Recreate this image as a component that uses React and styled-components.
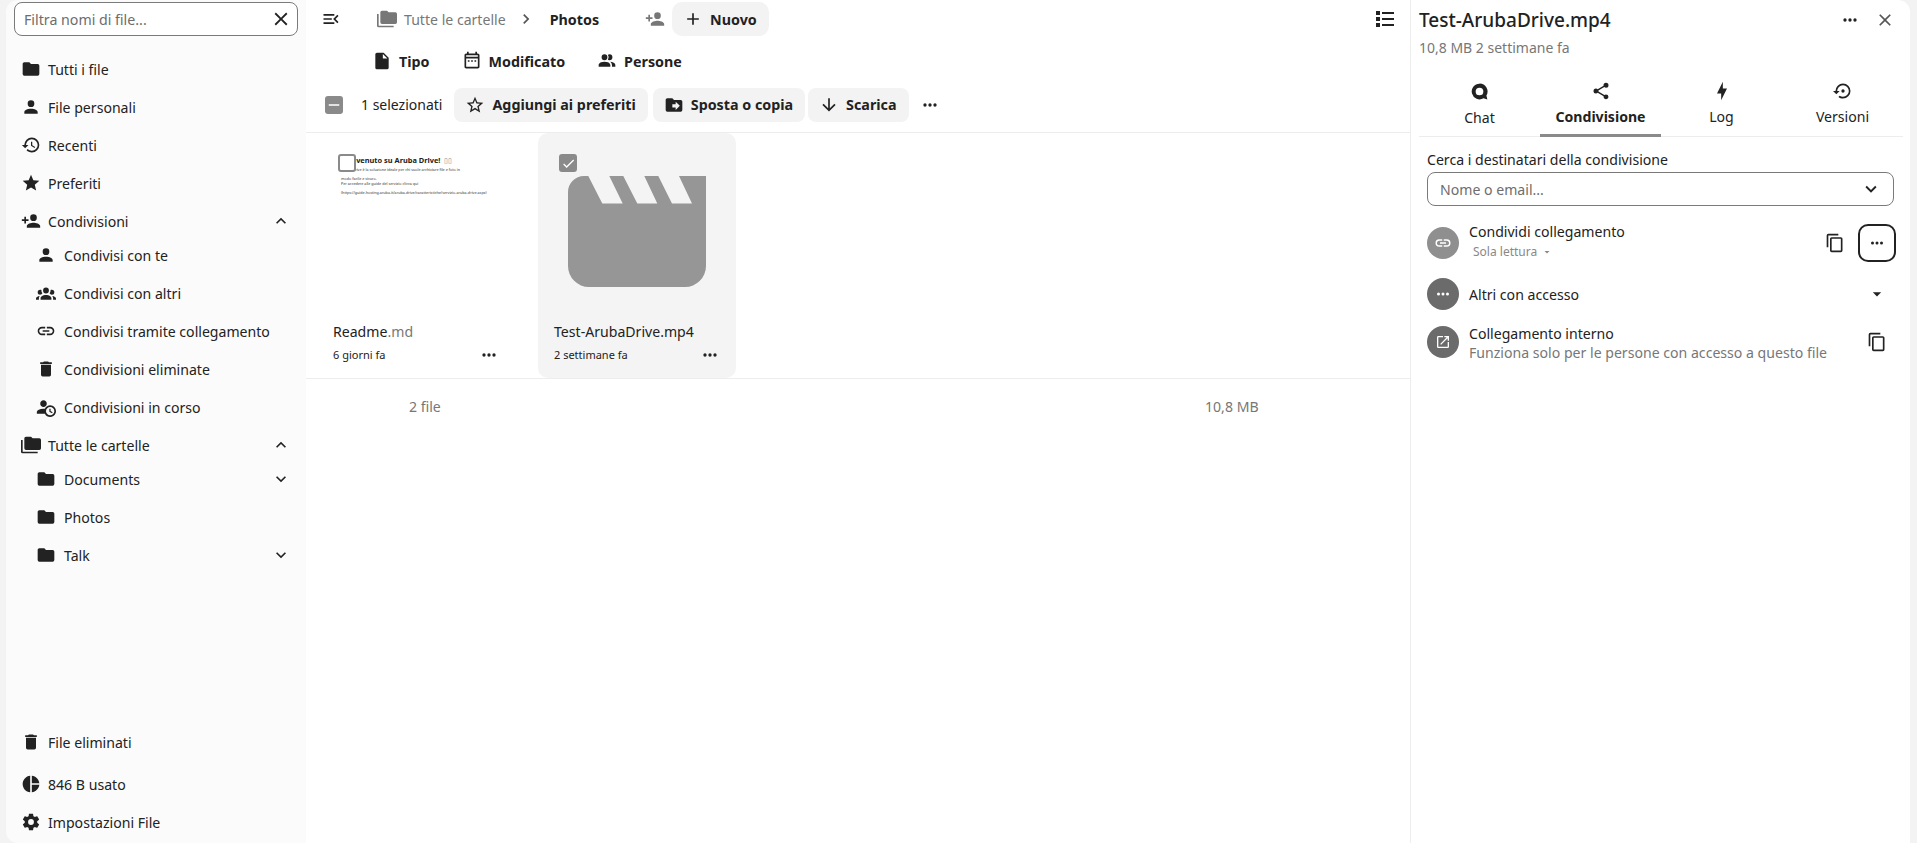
import React from "react";
import styled, { createGlobalStyle } from "styled-components";

const P = {
  folder: "M10,4H4C2.89,4 2,4.89 2,6V18A2,2 0 0,0 4,20H20A2,2 0 0,0 22,18V8C22,6.89 21.1,6 20,6H12L10,4Z",
  account: "M12,4A4,4 0 0,1 16,8A4,4 0 0,1 12,12A4,4 0 0,1 8,8A4,4 0 0,1 12,4M12,14C16.42,14 20,15.79 20,18V20H4V18C4,15.79 7.58,14 12,14Z",
  history: "M13.5,8H12V13L16.28,15.54L17,14.33L13.5,12.25V8M13,3A9,9 0 0,0 4,12H1L4.96,16.03L9,12H6A7,7 0 0,1 13,5A7,7 0 0,1 20,12A7,7 0 0,1 13,19C11.07,19 9.32,18.21 8.06,16.94L6.64,18.36C8.27,20 10.5,21 13,21A9,9 0 0,0 22,12A9,9 0 0,0 13,3",
  star: "M12,17.27L18.18,21L16.54,13.97L22,9.24L14.81,8.62L12,2L9.19,8.62L2,9.24L7.45,13.97L5.82,21L12,17.27Z",
  accountPlus: "M15,14C12.33,14 7,15.33 7,18V20H23V18C23,15.33 17.67,14 15,14M6,10V7H4V10H1V12H4V15H6V12H9V10M15,12A4,4 0 0,0 19,8A4,4 0 0,0 15,4A4,4 0 0,0 11,8A4,4 0 0,0 15,12Z",
  group: "M12,5.5A3.5,3.5 0 0,1 15.5,9A3.5,3.5 0 0,1 12,12.5A3.5,3.5 0 0,1 8.5,9A3.5,3.5 0 0,1 12,5.5M5,8C5.56,8 6.08,8.15 6.53,8.42C6.38,9.85 6.8,11.27 7.66,12.38C7.16,13.34 6.16,14 5,14A3,3 0 0,1 2,11A3,3 0 0,1 5,8M19,8A3,3 0 0,1 22,11A3,3 0 0,1 19,14C17.84,14 16.84,13.34 16.34,12.38C17.2,11.27 17.62,9.85 17.47,8.42C17.92,8.15 18.44,8 19,8M5.5,18.25C5.5,16.18 8.41,14.5 12,14.5C15.59,14.5 18.5,16.18 18.5,18.25V20H5.5V18.25M0,20V18.5C0,17.11 1.89,15.94 4.45,15.6C3.86,16.28 3.5,17.22 3.5,18.25V20H0M24,20H20.5V18.25C20.5,17.22 20.14,16.28 19.55,15.6C22.11,15.94 24,17.11 24,18.5V20Z",
  link: "M3.9,12C3.9,10.29 5.29,8.9 7,8.9H11V7H7A5,5 0 0,0 2,12A5,5 0 0,0 7,17H11V15.1H7C5.29,15.1 3.9,13.71 3.9,12M8,13H16V11H8V13M17,7H13V8.9H17C18.71,8.9 20.1,10.29 20.1,12C20.1,13.71 18.71,15.1 17,15.1H13V17H17A5,5 0 0,0 22,12A5,5 0 0,0 17,7Z",
  del: "M19,4H15.5L14.5,3H9.5L8.5,4H5V6H19M6,19A2,2 0 0,0 8,21H16A2,2 0 0,0 18,19V7H6V19Z",
  accountClock: "M10.63,14.1C12.23,10.58 16.38,9.03 19.9,10.63C23.42,12.23 24.97,16.38 23.37,19.9C22.24,22.4 19.75,24 17,24C14.3,24 11.83,22.44 10.67,20H1V18C1.06,16.86 1.84,15.93 3.34,15.18C4.84,14.43 6.72,14.04 9,14C9.57,14 10.11,14.05 10.63,14.1V14.1M9,4C10.12,4.03 11.06,4.42 11.81,5.17C12.56,5.92 12.93,6.86 12.93,8C12.93,9.14 12.56,10.08 11.81,10.83C11.06,11.58 10.12,11.95 9,11.95C7.88,11.95 6.94,11.58 6.19,10.83C5.44,10.08 5.07,9.14 5.07,8C5.07,6.86 5.44,5.92 6.19,5.17C6.94,4.42 7.88,4.03 9,4M17,22A5,5 0 0,0 22,17A5,5 0 0,0 17,12A5,5 0 0,0 12,17A5,5 0 0,0 17,22M16,14H17.5V16.82L19.94,18.23L19.19,19.53L16,17.69V14Z",
  folderMulti: "M22,4H14L12,2H6A2,2 0 0,0 4,4V16A2,2 0 0,0 6,18H22A2,2 0 0,0 24,16V6A2,2 0 0,0 22,4M2,6H0V11H0V20A2,2 0 0,0 2,22H20V20H2V6Z",
  up: "M7.41,15.41L12,10.83L16.59,15.41L18,14L12,8L6,14L7.41,15.41Z",
  down: "M7.41,8.58L12,13.17L16.59,8.58L18,10L12,16L6,10L7.41,8.58Z",
  right: "M8.59,16.58L13.17,12L8.59,7.41L10,6L16,12L10,18L8.59,16.58Z",
  close: "M19,6.41L17.59,5L12,10.59L6.41,5L5,6.41L10.59,12L5,17.59L6.41,19L12,13.41L17.59,19L19,17.59L13.41,12L19,6.41Z",
  pie: "M11,2V22C5.9,21.5 2,17.2 2,12C2,6.8 5.9,2.5 11,2M13,2V11H22C21.5,6.2 17.8,2.5 13,2M13,13V22C17.7,21.5 21.5,17.8 22,13H13Z",
  cog: "M12,15.5A3.5,3.5 0 0,1 8.5,12A3.5,3.5 0 0,1 12,8.5A3.5,3.5 0 0,1 15.5,12A3.5,3.5 0 0,1 12,15.5M19.43,12.97C19.47,12.65 19.5,12.33 19.5,12C19.5,11.67 19.47,11.34 19.43,11L21.54,9.37C21.73,9.22 21.78,8.95 21.66,8.73L19.66,5.27C19.54,5.05 19.27,4.96 19.05,5.05L16.56,6.05C16.04,5.66 15.5,5.32 14.87,5.07L14.5,2.42C14.46,2.18 14.25,2 14,2H10C9.75,2 9.54,2.18 9.5,2.42L9.13,5.07C8.5,5.32 7.96,5.66 7.44,6.05L4.95,5.05C4.73,4.96 4.46,5.05 4.34,5.27L2.34,8.73C2.21,8.95 2.27,9.22 2.46,9.37L4.57,11C4.53,11.34 4.5,11.67 4.5,12C4.5,12.33 4.53,12.65 4.57,12.97L2.46,14.63C2.27,14.78 2.21,15.05 2.34,15.27L4.34,18.73C4.46,18.95 4.73,19.03 4.95,18.95L7.44,17.94C7.96,18.34 8.5,18.68 9.13,18.93L9.5,21.58C9.54,21.82 9.75,22 10,22H14C14.25,22 14.46,21.82 14.5,21.58L14.87,18.93C15.5,18.67 16.04,18.34 16.56,17.94L19.05,18.95C19.27,19.03 19.54,18.95 19.66,18.73L21.66,15.27C21.78,15.05 21.73,14.78 21.54,14.63L19.43,12.97Z",
  menuOpen: "M21,15.61L19.59,17L14.58,12L19.59,7L21,8.39L17.44,12L21,15.61M3,6H16V8H3V6M3,13V11H13V13H3M3,18V16H16V18H3Z",
  plus: "M19,13H13V19H11V13H5V11H11V5H13V11H19V13Z",
  file: "M13,9V3.5L18.5,9M6,2C4.89,2 4,2.89 4,4V20A2,2 0 0,0 6,22H18A2,2 0 0,0 20,20V8L14,2H6Z",
  calendar: "M7 11H9V13H7V11M21 5V19C21 20.11 20.11 21 19 21H5C3.89 21 3 20.1 3 19V5C3 3.9 3.9 3 5 3H6V1H8V3H16V1H18V3H19C20.11 3 21 3.9 21 5M5 7H19V5H5V7M19 19V9H5V19H19M17 13V11H15V13H17M13 13V11H11V13H13Z",
  people: "M16 17V19H2V17S2 13 9 13 16 17 16 17M12.5 7.5A3.5 3.5 0 1 0 9 11A3.5 3.5 0 0 0 12.5 7.5M15.94 13A5.32 5.32 0 0 1 18 17V19H22V17S22 13.37 15.94 13M15 4A3.39 3.39 0 0 0 13.07 4.59A5 5 0 0 1 13.07 10.41A3.39 3.39 0 0 0 15 11A3.5 3.5 0 0 0 15 4Z",
  starOutline: "M12,15.39L8.24,17.66L9.23,13.38L5.91,10.5L10.29,10.13L12,6.09L13.71,10.13L18.09,10.5L14.77,13.38L15.76,17.66M22,9.24L14.81,8.62L12,2L9.19,8.62L2,9.24L7.45,13.97L5.82,21L12,17.27L18.18,21L16.54,13.97L22,9.24Z",
  folderMove: "M14,18V15H10V11H14V8L19,13M20,6H12L10,4H4C2.89,4 2,4.89 2,6V18A2,2 0 0,0 4,20H20A2,2 0 0,0 22,18V8C22,6.89 21.1,6 20,6Z",
  arrowDown: "M11,4H13V16L18.5,10.5L19.92,11.92L12,19.84L4.08,11.92L5.5,10.5L11,16V4Z",
  dots: "M16,12A2,2 0 0,1 18,10A2,2 0 0,1 20,12A2,2 0 0,1 18,14A2,2 0 0,1 16,12M10,12A2,2 0 0,1 12,10A2,2 0 0,1 14,12A2,2 0 0,1 12,14A2,2 0 0,1 10,12M4,12A2,2 0 0,1 6,10A2,2 0 0,1 8,12A2,2 0 0,1 6,14A2,2 0 0,1 4,12Z",
  listSquare: "M3,4H7V8H3V4M9,5V7H21V5H9M3,10H7V14H3V10M9,11V13H21V11H9M3,16H7V20H3V16M9,17V19H21V17H9",
  share: "M18,16.08C17.24,16.08 16.56,16.38 16.04,16.85L8.91,12.7C8.96,12.47 9,12.24 9,12C9,11.76 8.96,11.53 8.91,11.3L15.96,7.19C16.5,7.69 17.21,8 18,8A3,3 0 0,0 21,5A3,3 0 0,0 18,2A3,3 0 0,0 15,5C15,5.24 15.04,5.47 15.09,5.7L8.04,9.81C7.5,9.31 6.79,9 6,9A3,3 0 0,0 3,12A3,3 0 0,0 6,15C6.79,15 7.5,14.69 8.04,14.19L15.16,18.34C15.11,18.55 15.08,18.77 15.08,19C15.08,20.61 16.39,21.91 18,21.91C19.61,21.91 20.92,20.61 20.92,19A2.92,2.92 0 0,0 18,16.08Z",
  bolt: "M11,15H6L13,1V9H18L11,23V15Z",
  restore: "M12,3A9,9 0 0,0 3,12H0L4,16L8,12H5A7,7 0 0,1 12,5A7,7 0 0,1 19,12A7,7 0 0,1 12,19C10.5,19 9.09,18.5 7.94,17.7L6.5,19.14C8.04,20.3 9.94,21 12,21A9,9 0 0,0 21,12A9,9 0 0,0 12,3M14,12A2,2 0 0,0 12,10A2,2 0 0,0 10,12A2,2 0 0,0 12,14A2,2 0 0,0 14,12Z",
  copy: "M19,21H8V7H19M19,5H8A2,2 0 0,0 6,7V21A2,2 0 0,0 8,23H19A2,2 0 0,0 21,21V7A2,2 0 0,0 19,5M16,1H4A2,2 0 0,0 2,3V17H4V3H16V1Z",
  openNew: "M14,3V5H17.59L7.76,14.83L9.17,16.24L19,6.41V10H21V3M19,19H5V5H12V3H5C3.89,3 3,3.9 3,5V19A2,2 0 0,0 5,21H19A2,2 0 0,0 21,19V12H19V19Z",
  menuDown: "M7,10L12,15L17,10H7Z",
  check: "M21,7L9,19L3.5,13.5L4.91,12.09L9,16.17L19.59,5.59L21,7Z",
  minus: "M19,13H5V11H19V13Z",
  talk: "M12 3A9 9 0 1 0 16.6 19.8L21 21L19.9 16.6A9 9 0 0 0 12 3ZM12 7.6A4.4 4.4 0 1 1 12 16.4A4.4 4.4 0 0 1 12 7.6Z",
};

const Global = createGlobalStyle`
  html, body { margin: 0; padding: 0; height: 100%; background: #f3f3f3; }
  body { font-family: "Noto Sans", "Open Sans", sans-serif; color: #222; overflow: hidden; }
  * { box-sizing: border-box; }
`;

const Svg = styled.svg`
  width: ${p => p.$size || 20}px;
  height: ${p => p.$size || 20}px;
  flex: none;
  display: block;
  fill: ${p => p.$color || "#222"};
`;
const Icon = ({ d, size, color, rule }) => (
  <Svg viewBox="0 0 24 24" $size={size} $color={color}><path d={d} fillRule={rule} /></Svg>
);

const Shell = styled.div`
  display: grid;
  grid-template-columns: 300px 1104px 500px;
  height: 843px;
  padding-left: 6px;
`;

/* sidebar */
const Sidebar = styled.aside`
  background: #fbfbfb;
  border-radius: 12px 0 0 12px;
  display: flex;
  flex-direction: column;
  padding-top: 2px;
  padding-bottom: 2px;
`;
const FilterBox = styled.div`
  margin: 0 8px 14px;
  height: 34px;
  border: 1px solid #7a7a7a;
  border-radius: 8px;
  background: #fff;
  display: flex;
  align-items: center;
  justify-content: space-between;
  padding: 0 5px 0 9px;
  font-size: 14.2px;
  color: #6d6d6d;
`;
const NavRow = styled.div`
  height: 38px;
  display: flex;
  align-items: center;
  padding-left: ${p => (p.$child ? 28 : 13)}px;
  padding-right: 15px;
  font-size: 14.1px;
  color: #222;
  margin-top: ${p => p.$pull || 0}px;
`;
const NavIcon = styled.span`
  width: 24px;
  display: flex;
  justify-content: center;
  flex: none;
  margin-right: ${p => (p.$child ? 6 : 5)}px;
`;
const NavLabel = styled.span`
  flex: 1;
  white-space: nowrap;
`;
const NavFoot = styled.div`
  margin-top: auto;
  display: flex;
  flex-direction: column;
`;

const NavItem = ({ icon, label, child, chevron, pull }) => (
  <NavRow $child={child} $pull={pull}>
    <NavIcon $child={child}><Icon d={icon} /></NavIcon>
    <NavLabel>{label}</NavLabel>
    {chevron && <Icon d={chevron} />}
  </NavRow>
);

/* main */
const Main = styled.main`
  background: #fff;
  display: flex;
  flex-direction: column;
`;
const TopBar = styled.div`
  height: 38px;
  display: flex;
  align-items: center;
  padding: 0 13px 0 15px;
`;
const CrumbMuted = styled.span`
  font-size: 14.1px;
  color: #777;
  margin-left: 7px;
`;
const CrumbStrong = styled.span`
  font-size: 14.3px;
  font-weight: 700;
`;
const Spacer = styled.div`
  width: ${p => p.$w}px;
  flex: none;
`;
const NewButton = styled.div`
  height: 34px;
  border-radius: 10px;
  background: #f3f3f3;
  display: flex;
  align-items: center;
  padding: 0 12px 0 11px;
  gap: 7px;
  font-size: 14.3px;
  font-weight: 700;
  margin-left: 7px;
`;
const Push = styled.div`
  margin-left: auto;
`;
const FilterBar = styled.div`
  height: 38px;
  margin-top: 4px;
  display: flex;
  align-items: center;
  padding-left: 66px;
  gap: 32px;
`;
const Chip = styled.div`
  display: flex;
  align-items: center;
  gap: 7px;
  font-size: 14.3px;
  font-weight: 700;
`;
const ActionBar = styled.div`
  height: 53px;
  padding: 8px 0 11px 19px;
  display: flex;
  align-items: center;
  border-bottom: 1px solid #ededed;
`;
const MixedCheck = styled.div`
  width: 18px;
  height: 18px;
  border-radius: 3px;
  background: #8a8a8a;
  display: flex;
  align-items: center;
  justify-content: center;
`;
const SelectedText = styled.span`
  font-size: 14px;
  margin: 0 12px 0 18px;
`;
const ActionButton = styled.div`
  height: 34px;
  border-radius: 8px;
  background: #f3f3f3;
  display: flex;
  align-items: center;
  gap: 7px;
  padding: 0 12px 0 11px;
  font-size: 14.3px;
  font-weight: 700;
  margin-right: ${p => p.$gap}px;
`;
const Cards = styled.div`
  display: flex;
  gap: 23px;
  padding-left: 11px;
  height: 246px;
  border-bottom: 1px solid #ededed;
`;
const Card = styled.div`
  position: relative;
  width: 198px;
  height: 245px;
  border-radius: 10px;
  background: ${p => (p.$selected ? "#f4f4f4" : "transparent")};
  padding: 0 16px;
  display: flex;
  flex-direction: column;
`;
const CardCheck = styled.div`
  position: absolute;
  left: 21px;
  top: 21px;
  width: 18px;
  height: 18px;
  border-radius: 3px;
  border: 2.5px solid #8a8a8a;
  background: ${p => (p.$on ? "#8a8a8a" : "#fff")};
  display: flex;
  align-items: center;
  justify-content: center;
`;
const Thumb = styled.div`
  height: 188px;
  padding-top: ${p => p.$top}px;
  overflow: hidden;
`;
const DocTitle = styled.div`
  font-size: 7.4px;
  font-weight: 700;
  line-height: 12px;
  white-space: nowrap;
  margin-left: 9px;
`;
const Tofu = styled.span`
  font-weight: 400;
  color: #888;
  margin-left: 4px;
`;
const DocLine = styled.div`
  font-size: 3.7px;
  line-height: 5px;
  white-space: nowrap;
  margin-left: 8px;
  margin-top: ${p => p.$gap || 0}px;
  color: #333;
`;
const Clap = styled.svg`
  width: 138px;
  height: 111px;
  display: block;
  margin-left: 14px;
`;
const FileName = styled.div`
  font-size: 14.1px;
  line-height: 22px;
  white-space: nowrap;
`;
const Ext = styled.span`
  color: #777;
`;
const FileMeta = styled.div`
  display: flex;
  align-items: center;
  justify-content: space-between;
  font-size: 11px;
  line-height: 20px;
  margin-top: 2px;
`;
const Summary = styled.div`
  display: grid;
  grid-template-columns: 796px auto;
  padding: 18px 0 0 103px;
  font-size: 14.1px;
  color: #777;
`;

/* details */
const Panel = styled.section`
  background: #fff;
  border-left: 1px solid #ededed;
  border-radius: 0 12px 0 0;
  padding-left: 8px;
  display: flex;
  flex-direction: column;
`;
const PanelHead = styled.div`
  height: 40px;
  display: flex;
  align-items: center;
  padding-right: 15px;
  gap: 15px;
`;
const PanelTitle = styled.div`
  font-size: 19px;
  font-weight: 500;
  flex: 1;
  white-space: nowrap;
`;
const PanelSub = styled.div`
  font-size: 14px;
  color: #777;
  line-height: 20px;
  margin-top: -2px;
`;
const Tabs = styled.div`
  display: grid;
  grid-template-columns: repeat(4, 121px);
  margin-top: 19px;
  border-bottom: 1px solid #ededed;
  width: 484px;
`;
const Tab = styled.div`
  height: 60px;
  display: flex;
  flex-direction: column;
  align-items: center;
  justify-content: flex-start;
  font-size: 14.1px;
  line-height: 20px;
  padding-top: 4px;
  gap: 6px;
  font-weight: ${p => (p.$active ? 700 : 400)};
  border-bottom: 3px solid ${p => (p.$active ? "#8a8a8a" : "transparent")};
  margin-bottom: -1px;
`;
const Body = styled.div`
  padding: 13px 14px 0 8px;
  display: flex;
  flex-direction: column;
`;
const FieldLabel = styled.div`
  font-size: 14.1px;
  line-height: 20px;
  height: 22px;
`;
const Combo = styled.div`
  height: 34px;
  width: 467px;
  border: 1px solid #7a7a7a;
  border-radius: 8px;
  display: flex;
  align-items: center;
  justify-content: space-between;
  padding: 0 11px 0 12px;
  font-size: 14.1px;
  color: #6d6d6d;
`;
const ShareList = styled.div`
  display: flex;
  flex-direction: column;
  gap: 16px;
  margin-top: 18px;
`;
const ShareRow = styled.div`
  display: flex;
  align-items: center;
  height: ${p => p.$h}px;
`;
const Avatar = styled.div`
  width: 32px;
  height: 32px;
  border-radius: 50%;
  flex: none;
  background: ${p => p.$bg};
  display: flex;
  align-items: center;
  justify-content: center;
  margin-right: 10px;
`;
const ShareText = styled.div`
  flex: 1;
  min-width: 0;
  white-space: nowrap;
  margin-top: ${p => p.$shift || 0}px;
`;
const ShareName = styled.div`
  font-size: 14.1px;
  line-height: 19px;
`;
const ShareNote = styled.div`
  font-size: 14.1px;
  line-height: 19px;
  color: #777;
`;
const PermNote = styled.div`
  font-size: 12px;
  line-height: 18px;
  color: #888;
  margin: 2px 0 0 4px;
  display: flex;
  align-items: center;
  gap: 4px;
`;
const IconSlot = styled.div`
  width: 38px;
  height: 38px;
  flex: none;
  display: flex;
  align-items: center;
  justify-content: center;
  margin-left: ${p => p.$gap || 0}px;
  border-radius: 10px;
  border: ${p => (p.$focus ? "2px solid #222" : "none")};
`;

export default function App() {
  return (
    <>
      <Global />
      <Shell>
        <Sidebar>
          <FilterBox>
            <span>Filtra nomi di file...</span>
            <Icon d={P.close} size={22} />
          </FilterBox>
          <NavItem icon={P.folder} label="Tutti i file" />
          <NavItem icon={P.account} label="File personali" />
          <NavItem icon={P.history} label="Recenti" />
          <NavItem icon={P.star} label="Preferiti" />
          <NavItem icon={P.accountPlus} label="Condivisioni" chevron={P.up} />
          <NavItem child icon={P.account} label="Condivisi con te" pull={-4} />
          <NavItem child icon={P.group} label="Condivisi con altri" />
          <NavItem child icon={P.link} label="Condivisi tramite collegamento" />
          <NavItem child icon={P.del} label="Condivisioni eliminate" />
          <NavItem child icon={P.accountClock} label="Condivisioni in corso" />
          <NavItem icon={P.folderMulti} label="Tutte le cartelle" chevron={P.up} />
          <NavItem child icon={P.folder} label="Documents" chevron={P.down} pull={-4} />
          <NavItem child icon={P.folder} label="Photos" />
          <NavItem child icon={P.folder} label="Talk" chevron={P.down} />
          <NavFoot>
            <NavItem icon={P.del} label="File eliminati" />
            <NavItem icon={P.pie} label="846 B usato" pull={4} />
            <NavItem icon={P.cog} label="Impostazioni File" />
          </NavFoot>
        </Sidebar>

        <Main>
          <TopBar>
            <Icon d={P.menuOpen} />
            <Spacer $w={36} />
            <Icon d={P.folderMulti} color="#777" />
            <CrumbMuted>Tutte le cartelle</CrumbMuted>
            <Spacer $w={10} />
            <Icon d={P.right} color="#555" />
            <Spacer $w={14} />
            <CrumbStrong>Photos</CrumbStrong>
            <Spacer $w={46} />
            <Icon d={P.accountPlus} color="#777" />
            <NewButton>
              <Icon d={P.plus} />
              Nuovo
            </NewButton>
            <Push><Icon d={P.listSquare} size={24} /></Push>
          </TopBar>
          <FilterBar>
            <Chip><Icon d={P.file} />Tipo</Chip>
            <Chip><Icon d={P.calendar} />Modificato</Chip>
            <Chip><Icon d={P.people} />Persone</Chip>
          </FilterBar>
          <ActionBar>
            <MixedCheck><Icon d={P.minus} size={18} color="#fff" /></MixedCheck>
            <SelectedText>1 selezionati</SelectedText>
            <ActionButton $gap={5}><Icon d={P.starOutline} />Aggiungi ai preferiti</ActionButton>
            <ActionButton $gap={3}><Icon d={P.folderMove} />Sposta o copia</ActionButton>
            <ActionButton $gap={11}><Icon d={P.arrowDown} />Scarica</ActionButton>
            <Icon d={P.dots} />
          </ActionBar>
          <Cards>
            <Card>
              <CardCheck />
              <Thumb $top={21}>
                <DocTitle>Benvenuto su Aruba Drive!<Tofu>▯▯</Tofu></DocTitle>
                <DocLine $gap={1}>Aruba Drive è la soluzione ideale per chi vuole archiviare file e foto in</DocLine>
                <DocLine $gap={4}>modo facile e sicuro.</DocLine>
                <DocLine>Per accedere alle guide del servizio clicca qui</DocLine>
                <DocLine $gap={4}>(https://guide.hosting.aruba.it/aruba-drive/caratteristiche/servizio-aruba-drive.aspx)</DocLine>
              </Thumb>
              <FileName>Readme<Ext>.md</Ext></FileName>
              <FileMeta>6 giorni fa<Icon d={P.dots} /></FileMeta>
            </Card>
            <Card $selected>
              <CardCheck $on><Icon d={P.check} size={15} color="#fff" /></CardCheck>
              <Thumb $top={43}>
                <Clap viewBox="0 0 138 111">
                  <path
                    fill="#969696"
                    fillRule="evenodd"
                    d="M16 0H138V90A21 21 0 0 1 117 111H21A21 21 0 0 1 0 90V16A16 16 0 0 1 16 0ZM20.3 0L34.3 27.5H54.7L41.3 0ZM55.3 0L69.3 27.5H89.3L76.3 0ZM90.3 0L104 27.5H124L111 0Z"
                  />
                </Clap>
              </Thumb>
              <FileName>Test-ArubaDrive.mp4</FileName>
              <FileMeta>2 settimane fa<Icon d={P.dots} /></FileMeta>
            </Card>
          </Cards>
          <Summary>
            <span>2 file</span>
            <span>10,8 MB</span>
          </Summary>
        </Main>

        <Panel>
          <PanelHead>
            <PanelTitle>Test-ArubaDrive.mp4</PanelTitle>
            <Icon d={P.dots} />
            <Icon d={P.close} color="#555" />
          </PanelHead>
          <PanelSub>10,8 MB 2 settimane fa</PanelSub>
          <Tabs>
            <Tab><Icon d={P.talk} rule="evenodd" size={21} />Chat</Tab>
            <Tab $active><Icon d={P.share} />Condivisione</Tab>
            <Tab><Icon d={P.bolt} />Log</Tab>
            <Tab><Icon d={P.restore} />Versioni</Tab>
          </Tabs>
          <Body>
            <FieldLabel>Cerca i destinatari della condivisione</FieldLabel>
            <Combo>
              <span>Nome o email...</span>
              <Icon d={P.down} size={22} />
            </Combo>
            <ShareList>
              <ShareRow $h={38}>
                <Avatar $bg="#8f8f8f"><Icon d={P.link} size={18} color="#fff" /></Avatar>
                <ShareText $shift={-3}>
                  <ShareName>Condividi collegamento</ShareName>
                  <PermNote>Sola lettura <Icon d={P.menuDown} size={12} color="#888" /></PermNote>
                </ShareText>
                <IconSlot><Icon d={P.copy} /></IconSlot>
                <IconSlot $focus $gap={4}><Icon d={P.dots} size={18} /></IconSlot>
              </ShareRow>
              <ShareRow $h={32}>
                <Avatar $bg="#6b6b6b"><Icon d={P.dots} size={18} color="#fff" /></Avatar>
                <ShareText><ShareName>Altri con accesso</ShareName></ShareText>
                <IconSlot><Icon d={P.menuDown} /></IconSlot>
              </ShareRow>
              <ShareRow $h={32}>
                <Avatar $bg="#6b6b6b"><Icon d={P.openNew} size={16} color="#fff" /></Avatar>
                <ShareText $shift={2}>
                  <ShareName>Collegamento interno</ShareName>
                  <ShareNote>Funziona solo per le persone con accesso a questo file</ShareNote>
                </ShareText>
                <IconSlot><Icon d={P.copy} /></IconSlot>
              </ShareRow>
            </ShareList>
          </Body>
        </Panel>
      </Shell>
    </>
  );
}
